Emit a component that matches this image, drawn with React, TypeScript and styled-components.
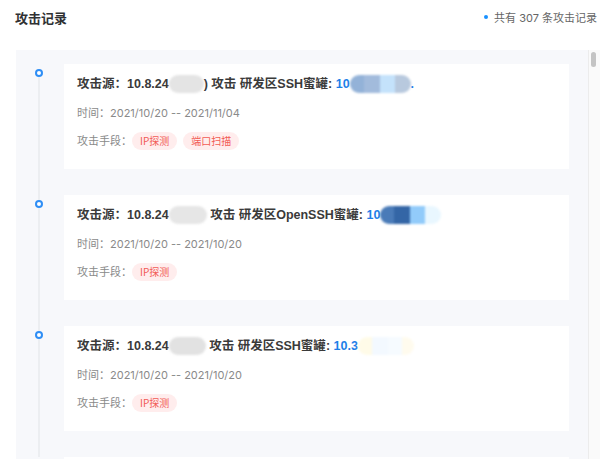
import React from "react"
import styled, { createGlobalStyle } from "styled-components"

const GlobalStyle = createGlobalStyle`
  html, body {
    margin: 0;
    padding: 0;
    background: #fff;
    font-family: "Liberation Sans", "Noto Sans CJK SC", sans-serif;
  }
`

interface SmudgePart {
  w: number
  color: string
}

interface Record {
  hidden: SmudgePart[]
  tail: string
  zone: string
  ipHead: string
  ipHidden: SmudgePart[]
  ipTail: string
  time: string
  tags: string[]
}

// 原图里 IP 被打了码，这里用模糊色块还原
const records: Record[] = [
  {
    hidden: [{ w: 35, color: "#e4e4e4" }],
    tail: ")",
    zone: "研发区SSH蜜罐",
    ipHead: "10",
    ipHidden: [
      { w: 14, color: "#93b2d8" },
      { w: 16, color: "#a2bbdc" },
      { w: 15, color: "#c4e2fb" },
      { w: 16, color: "#b8c9de" },
    ],
    ipTail: ".",
    time: "2021/10/20 -- 2021/11/04",
    tags: ["IP探测", "端口扫描"],
  },
  {
    hidden: [{ w: 38, color: "#e6e6e6" }],
    tail: "",
    zone: "研发区OpenSSH蜜罐",
    ipHead: "10",
    ipHidden: [
      { w: 14, color: "#4a7bb8" },
      { w: 16, color: "#3466a6" },
      { w: 15, color: "#92cbfa" },
      { w: 16, color: "#e9f7ff" },
    ],
    ipTail: "",
    time: "2021/10/20 -- 2021/10/20",
    tags: ["IP探测"],
  },
  {
    hidden: [{ w: 37, color: "#e2e2e2" }],
    tail: "",
    zone: "研发区SSH蜜罐",
    ipHead: "10.3",
    ipHidden: [
      { w: 14, color: "#fffbe8" },
      { w: 16, color: "#f3f9ff" },
      { w: 14, color: "#f6fbff" },
      { w: 12, color: "#fffbee" },
    ],
    ipTail: "",
    time: "2021/10/20 -- 2021/10/20",
    tags: ["IP探测"],
  },
]

const stripes = (parts: SmudgePart[]) => {
  const total = parts.reduce((s, p) => s + p.w, 0)
  let at = 0
  const stops = parts.map((p) => {
    const from = (at / total) * 100
    at += p.w
    const to = (at / total) * 100
    return `${p.color} ${from}% ${to}%`
  })
  return { width: total, background: `linear-gradient(90deg, ${stops.join(", ")})` }
}

const Smudge = ({ parts }: { parts: SmudgePart[] }) => <Blur style={stripes(parts)} />

const App = (): JSX.Element => {
  return (
    <>
      <GlobalStyle />
      <Page>
        <Header>
          <Title>攻击记录</Title>
          <Summary>
            <SummaryDot />
            共有 307 条攻击记录
          </Summary>
        </Header>
        <Body>
          <Panel>
            {records.map((r, i) => (
              <Item key={i}>
                <Rail>
                  <RailLine $hidden={i === 0} $size={5} />
                  <Dot />
                  <RailLine $hidden={false} />
                </Rail>
                <Card>
                  <CardTitle>
                    攻击源：10.8.24
                    <Smudge parts={r.hidden} />
                    {r.tail} 攻击 {r.zone}: <Ip>{r.ipHead}</Ip>
                    <Smudge parts={r.ipHidden} />
                    <Ip>{r.ipTail}</Ip>
                  </CardTitle>
                  <Meta>时间：{r.time}</Meta>
                  <TagRow>
                    <Meta>攻击手段：</Meta>
                    {r.tags.map((t) => (
                      <Tag key={t}>{t}</Tag>
                    ))}
                  </TagRow>
                </Card>
              </Item>
            ))}
            <NextCard />
          </Panel>
          <ScrollTrack>
            <ScrollThumb />
          </ScrollTrack>
        </Body>
      </Page>
    </>
  )
}

const Page = styled.div`
  width: 600px;
  height: 469px;
  padding-left: 16px;
  box-sizing: border-box;
  overflow: hidden;
`

const Header = styled.div`
  height: 34px;
  margin-bottom: 16px;
  padding-right: 3px;
  display: flex;
  align-items: center;
  justify-content: space-between;
`

const Title = styled.h2`
  margin: 0 0 0 -1px;
  font-size: 13px;
  font-weight: 700;
  color: #303133;
`

const Summary = styled.div`
  display: flex;
  align-items: center;
  gap: 6px;
  font-family: Inter, "Noto Sans CJK SC", sans-serif;
  font-size: 11px;
  color: #666;
`

const SummaryDot = styled.span`
  width: 4px;
  height: 4px;
  border-radius: 50%;
  background: #1890ff;
`

const Body = styled.div`
  height: 409px;
  display: flex;
`

const Panel = styled.div`
  flex: 1;
  box-sizing: border-box;
  padding: 14px 19px 0 0;
  background: #f7f8fb;
  overflow: hidden;
`

const ScrollTrack = styled.div`
  width: 12px;
  flex-shrink: 0;
  background: #fafafa;
  border-left: 1px solid #ececec;
  padding: 2px 4px 0 2px;
  box-sizing: border-box;
`

const ScrollThumb = styled.div`
  height: 15px;
  border-radius: 4px;
  background: #c4c4c4;
`

const Item = styled.div`
  display: flex;
  gap: 3px;
  padding-bottom: 26px;
`

const Rail = styled.div`
  width: 45px;
  flex-shrink: 0;
  display: flex;
  flex-direction: column;
  align-items: center;
  margin-bottom: -26px;
`

const RailLine = styled.div<{ $hidden: boolean; $size?: number }>`
  width: 2px;
  background: ${(p) => (p.$hidden ? "transparent" : "#eceef1")};
  ${(p) => (p.$size ? `height: ${p.$size}px;` : "flex: 1;")}
`

const Dot = styled.span`
  width: 8px;
  height: 8px;
  box-sizing: border-box;
  border-radius: 50%;
  border: 2px solid #2f8ef5;
  background: #fff;
  flex-shrink: 0;
`

const Card = styled.div`
  flex: 1;
  background: #fff;
  padding: 10px 13px 19px;
  display: flex;
  flex-direction: column;
  gap: 10px;
`

// 下一条记录只露出顶边
const NextCard = styled.div`
  margin-left: 48px;
  height: 4px;
  background: #fff;
`

const CardTitle = styled.div`
  height: 20px;
  line-height: 20px;
  font-size: 12.5px;
  font-weight: 600;
  color: #3a3a3a;
  white-space: nowrap;
`

const Ip = styled.span`
  color: #1e7fe8;
`

const Blur = styled.span`
  display: inline-block;
  vertical-align: middle;
  height: 18px;
  margin-top: -2px;
  border-radius: 9px;
  filter: blur(1.2px);
`

const Meta = styled.div`
  line-height: 18px;
  font-family: Inter, "Noto Sans CJK SC", sans-serif;
  font-size: 11px;
  color: #8a8a8a;
`

const TagRow = styled.div`
  display: flex;
  align-items: center;
`

const Tag = styled.span`
  height: 18px;
  line-height: 18px;
  margin-right: 6px;
  padding: 0 8px;
  border-radius: 9px;
  font-family: "Noto Sans CJK SC", sans-serif;
  font-size: 10px;
  color: #f25b55;
  background: #ffeded;
`

export default App
